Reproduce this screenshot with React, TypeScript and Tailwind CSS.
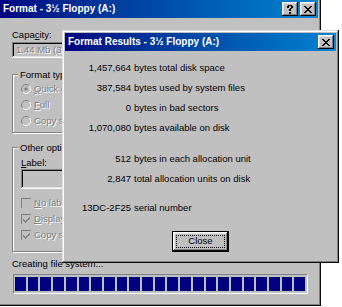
import React from 'react';

const frame =
  'shadow-[inset_-1px_-1px_#0a0a0a,inset_1px_1px_#dfdfdf,inset_-2px_-2px_#808080,inset_2px_2px_#ffffff]';
const raised =
  'shadow-[inset_-1px_-1px_#0a0a0a,inset_1px_1px_#ffffff,inset_-2px_-2px_#808080,inset_2px_2px_#dfdfdf]';
const sunken =
  'shadow-[inset_-1px_-1px_#ffffff,inset_1px_1px_#808080,inset_-2px_-2px_#dfdfdf,inset_2px_2px_#0a0a0a]';
const disabled = 'text-[#808080] [text-shadow:1px_1px_0_#ffffff]';

const CloseGlyph = () => (
  <svg width="8" height="7" viewBox="0 0 8 7" shapeRendering="crispEdges">
    <path
      fill="#000"
      d="M0 0h2v1H0z M6 0h2v1H6z M1 1h2v1H1z M5 1h2v1H5z M2 2h4v1H2z M3 3h2v1H3z M2 4h4v1H2z M1 5h2v1H1z M5 5h2v1H5z M0 6h2v1H0z M6 6h2v1H6z"
    />
  </svg>
);

const HelpGlyph = () => (
  <svg width="6" height="9" viewBox="0 0 6 9" shapeRendering="crispEdges">
    <path
      fill="#000"
      d="M1 0h4v1H1z M0 1h2v2H0z M4 1h2v2H4z M3 3h2v1H3z M2 4h2v2H2z M2 7h2v2H2z"
    />
  </svg>
);

const TitleButton = ({ children, className = '' }: { children: React.ReactNode; className?: string }) => (
  <div className={`w-[16px] h-[14px] bg-[#c0c0c0] flex items-center justify-center ${raised} ${className}`}>
    {children}
  </div>
);

const TitleBar = ({ title, help }: { title: string; help?: boolean }) => (
  <div className="h-[18px] flex items-center pl-[3px] pr-[2px] bg-linear-to-r from-[#000080] to-[#1084d0]">
    <span className="flex-1 text-white font-bold text-[10px] leading-[12px] whitespace-nowrap">{title}</span>
    {help && (
      <TitleButton>
        <HelpGlyph />
      </TitleButton>
    )}
    <TitleButton className={help ? 'ml-[2px]' : ''}>
      <CloseGlyph />
    </TitleButton>
  </div>
);

const Radio = ({ checked, label, u }: { checked?: boolean; label: string; u: string }) => (
  <div className="h-[16px] flex items-center">
    <svg width="10" height="10" viewBox="0 0 10 10" className="mr-[3px]">
      <circle cx="5" cy="5" r="4.5" fill="#c0c0c0" />
      <path d="M1.8 8.2 A4.5 4.5 0 0 1 8.2 1.8" fill="none" stroke="#808080" strokeWidth="1" />
      <path d="M8.2 1.8 A4.5 4.5 0 0 1 1.8 8.2" fill="none" stroke="#ffffff" strokeWidth="1" />
      {checked && <circle cx="5" cy="5" r="1.6" fill="#808080" />}
    </svg>
    <span className={`whitespace-nowrap ${disabled}`}>
      <span className="underline">{u}</span>
      {label}
    </span>
  </div>
);

const Check = ({ checked, label, u }: { checked?: boolean; label: string; u: string }) => (
  <div className="h-[16px] flex items-center">
    <div className="w-[10px] h-[10px] mr-[3px] bg-[#c0c0c0] border-t border-l border-[#808080] border-b-white border-r-white flex items-center justify-center">
      {checked && (
        <svg width="7" height="6" viewBox="0 0 7 6" shapeRendering="crispEdges">
          <path fill="#808080" d="M6 0h1v2H6z M5 1h1v2H5z M4 2h1v2H4z M3 3h1v2H3z M2 4h1v2H2z M1 3h1v2H1z M0 2h1v2H0z" />
        </svg>
      )}
    </div>
    <span className={`whitespace-nowrap ${disabled}`}>
      <span className="underline">{u}</span>
      {label}
    </span>
  </div>
);

const Group = ({ title, className = '', children }: { title: string; className?: string; children: React.ReactNode }) => (
  <div
    className={`relative border border-[#808080] shadow-[inset_1px_1px_#ffffff,1px_1px_#ffffff] pl-[8px] ${className}`}
  >
    <span className="absolute -top-[6px] left-[5px] px-[2px] bg-[#c0c0c0] leading-[12px]">{title}</span>
    {children}
  </div>
);

const results = [
  ['1,457,664', 'bytes total disk space'],
  ['387,584', 'bytes used by system files'],
  ['0', 'bytes in bad sectors'],
  ['1,070,080', 'bytes available on disk'],
];

const units = [
  ['512', 'bytes in each allocation unit'],
  ['2,847', 'total allocation units on disk'],
];

const Row = ({ n, text }: { n: string; text: string }) => (
  <div className="h-[20px] flex items-center">
    <span className="w-[66px] text-right">{n}</span>
    <span className="ml-[3px] whitespace-nowrap">{text}</span>
  </div>
);

export default function App() {
  return (
    <div className="relative w-[342px] h-[307px] overflow-hidden bg-white text-black text-[9.5px] font-['Liberation_Sans',Arial,sans-serif]">
      {/* back window: Format */}
      <div className={`absolute -left-[3px] -top-[3px] w-[324px] h-[309px] p-[3px] bg-[#c0c0c0] ${frame}`}>
        <TitleBar title="Format - 3½ Floppy (A:)" help />
        <div className="flex flex-col pl-[12px] pr-[12px]">
          <div className="mt-[11px] h-[12px] leading-[12px]">
            Capa<span className="underline">c</span>ity:
          </div>
          <div className={`mt-[1px] h-[16px] w-[260px] pl-[4px] flex items-center ${sunken}`}>
            <span className={disabled}>1.44 Mb (3.5")</span>
          </div>

          <Group title="Format type" className="mt-[16px] pt-[6px] pb-[3px]">
            <Radio checked u="Q" label="uick (erase)" />
            <Radio u="F" label="ull" />
            <Radio u="" label="Copy system files only" />
          </Group>

          <Group title="Other options" className="mt-[14px] pt-[9px] pb-[8px]">
            <div className="h-[12px] leading-[12px]">
              <span className="underline">L</span>abel:
            </div>
            <div className={`h-[20px] w-[200px] ${sunken}`} />
            <div className="mt-[6px]">
              <Check u="N" label="o label" />
              <Check checked u="D" label="isplay summary when finished" />
              <Check checked u="" label="Copy system files" />
            </div>
          </Group>

          <div className="mt-[6px] h-[12px] leading-[12px]">Creating file system...</div>
          <div className="mt-[4px] ml-[1px] w-[295px] h-[20px] p-[2px] pl-[1px] border border-t-[#808080] border-l-[#808080] border-b-white border-r-white flex gap-[2px]">
            {Array.from({ length: 23 }).map((_, i) => (
              <div key={i} className="flex-1 bg-[#000080]" />
            ))}
          </div>
        </div>
      </div>

      {/* front window: Format Results */}
      <div className={`absolute left-[62px] top-[30px] w-[277px] h-[233px] p-[3px] bg-[#c0c0c0] ${frame}`}>
        <TitleBar title="Format Results - 3½ Floppy (A:)" />
        <div className="flex flex-col pt-[7px]">
          {results.map(([n, t]) => (
            <Row key={t} n={n} text={t} />
          ))}
          <div className="mt-[11px]">
            {units.map(([n, t]) => (
              <Row key={t} n={n} text={t} />
            ))}
          </div>
          <div className="mt-[9px]">
            <Row n="13DC-2F25" text="serial number" />
          </div>
          <div className="mt-[13px] flex justify-center">
            <div className="w-[57px] h-[21px] border border-black bg-[#c0c0c0]">
              <div className={`w-full h-full p-[3px] ${raised}`}>
                <div className="w-full h-full border border-dotted border-black flex items-center justify-center">
                  Close
                </div>
              </div>
            </div>
          </div>
        </div>
      </div>
    </div>
  );
}
